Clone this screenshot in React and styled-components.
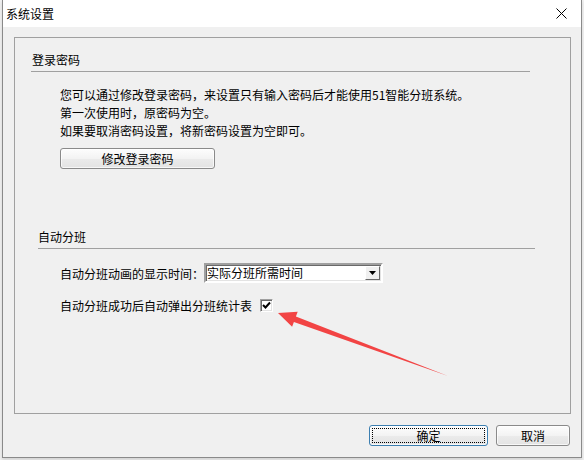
import styled, { createGlobalStyle } from 'styled-components'

const GlobalStyle = createGlobalStyle`
  html, body {
    margin: 0;
    padding: 0;
    background: #f0f0f0;
  }
  body {
    font-family: "Noto Sans CJK SC", "Noto Sans", sans-serif;
    font-size: 12px;
    color: #000;
  }
`

const Page = styled.div`
  position: relative;
  width: 584px;
  height: 460px;
  overflow: hidden;
`

const Window = styled.div`
  margin-left: 2px;
  width: 578px;
  height: 457px;
  border: 1px solid #8a8a8a;
  border-top: none;
  background: #f0f0f0;
  display: flex;
  flex-direction: column;
  box-shadow: 0 2px 3px rgba(0, 0, 0, 0.12);
`

const TitleBar = styled.div`
  height: 27px;
  flex: none;
  background: #fff;
  display: flex;
  align-items: center;
  justify-content: space-between;
  padding: 0 14px 0 3px;
  font-size: 12px;
  line-height: 16px;
`

const Content = styled.div`
  padding: 10px 10px 0 11px;
  display: flex;
  flex-direction: column;
`

const Group = styled.div`
  height: 375px;
  border: 1px solid #a0a0a0;
  display: flex;
  flex-direction: column;
  align-items: flex-start;
`

const SectionTitle = styled.div`
  margin-top: ${(p) => p.top}px;
  margin-left: ${(p) => p.indent}px;
  line-height: 16px;
`

const Rule = styled.div`
  margin-top: 3px;
  margin-left: ${(p) => p.indent}px;
  width: ${(p) => p.width}px;
  height: 1px;
  background: #a0a0a0;
`

const Paragraph = styled.div`
  margin: 14px 0 0 45px;
  line-height: 18px;
`

const Button = styled.button`
  font: inherit;
  font-size: 12px;
  color: #000;
  height: 21px;
  width: ${(p) => p.width}px;
  padding: 0;
  border: 1px solid ${(p) => (p.focused ? '#3c7fb1' : '#8a8a8a')};
  border-radius: 3px;
  background: linear-gradient(#fdfdfd, #f3f3f3 50%, #ebebeb 51%, #e3e3e3);
  box-shadow: inset 0 0 0 1px rgba(255, 255, 255, 0.7);
  display: flex;
  align-items: center;
  justify-content: center;
  outline: ${(p) => (p.focused ? '1px dotted #000' : 'none')};
  outline-offset: -4px;
`

const EditButton = styled(Button)`
  margin: 8px 0 0 45px;
`

const Row = styled.div`
  display: flex;
  align-items: center;
  margin: 14px 0 0 45px;
  height: ${(p) => p.height}px;
`

const Combo = styled.div`
  width: 174px;
  height: 16px;
  border: 2px solid;
  border-color: #a0a0a0 #fff #fff #a0a0a0;
  box-shadow: inset 1px 1px 0 #696969, inset -1px -1px 0 #e3e3e3;
  background: #fff;
  display: flex;
  align-items: center;
  justify-content: space-between;
  padding-left: 1px;
  line-height: 16px;
`

const ComboArrow = styled.div`
  width: 15px;
  height: 14px;
  margin-right: 1px;
  background: #f0f0f0;
  border: 1px solid;
  border-color: #fff #696969 #696969 #fff;
  box-sizing: border-box;
  display: flex;
  align-items: center;
  justify-content: center;
`

const Check = styled.div`
  width: 13px;
  height: 13px;
  margin-left: 8px;
  box-sizing: border-box;
  border: 1px solid;
  border-color: #a0a0a0 #fff #fff #a0a0a0;
  box-shadow: inset 1px 1px 0 #696969, inset -1px -1px 0 #e3e3e3;
  background: #fff;
  display: flex;
  align-items: center;
  justify-content: center;
`

const Footer = styled.div`
  display: flex;
  justify-content: flex-end;
  gap: 8px;
  margin-top: 11px;
  padding-right: 1px;
`

const Arrow = styled.svg`
  position: absolute;
  left: 0;
  top: 0;
  pointer-events: none;
`

export default function App() {
  return (
    <Page>
      <GlobalStyle />
      <Window>
        <TitleBar>
          <span>系统设置</span>
          <svg width='11' height='11' viewBox='0 0 11 11'>
            <path d='M0.5 0.5 L10.5 10.5 M10.5 0.5 L0.5 10.5' stroke='#000' strokeWidth='1' />
          </svg>
        </TitleBar>
        <Content>
          <Group>
            <SectionTitle top={14} indent={17}>登录密码</SectionTitle>
            <Rule indent={16} width={499} />
            <Paragraph>
              <div>您可以通过修改登录密码，来设置只有输入密码后才能使用51智能分班系统。</div>
              <div>第一次使用时，原密码为空。</div>
              <div>如果要取消密码设置，将新密码设置为空即可。</div>
            </Paragraph>
            <EditButton width={155}>修改登录密码</EditButton>

            <SectionTitle top={60} indent={23}>自动分班</SectionTitle>
            <Rule indent={23} width={497} />
            <Row height={20}>
              <span>自动分班动画的显示时间：</span>
              <Combo>
                <span>实际分班所需时间</span>
                <ComboArrow>
                  <svg width='7' height='4' viewBox='0 0 7 4'>
                    <path d='M0 0 H7 L3.5 4 Z' fill='#000' />
                  </svg>
                </ComboArrow>
              </Combo>
            </Row>
            <Row height={16}>
              <span>自动分班成功后自动弹出分班统计表</span>
              <Check>
                <svg width='9' height='9' viewBox='0 0 9 9'>
                  <path d='M1 4 L3.5 6.5 L8 1.5' fill='none' stroke='#000' strokeWidth='2' />
                </svg>
              </Check>
            </Row>
          </Group>
          <Footer>
            <Button width={119} focused>确定</Button>
            <Button width={74}>取消</Button>
          </Footer>
        </Content>
      </Window>
      <Arrow width='584' height='460' viewBox='0 0 584 460'>
        <polygon
          points='278,313 297.7,311.8 295.9,316.5 448,376 293.9,322.1 292.1,326.8'
          fill='#f24444'
        />
      </Arrow>
    </Page>
  )
}
